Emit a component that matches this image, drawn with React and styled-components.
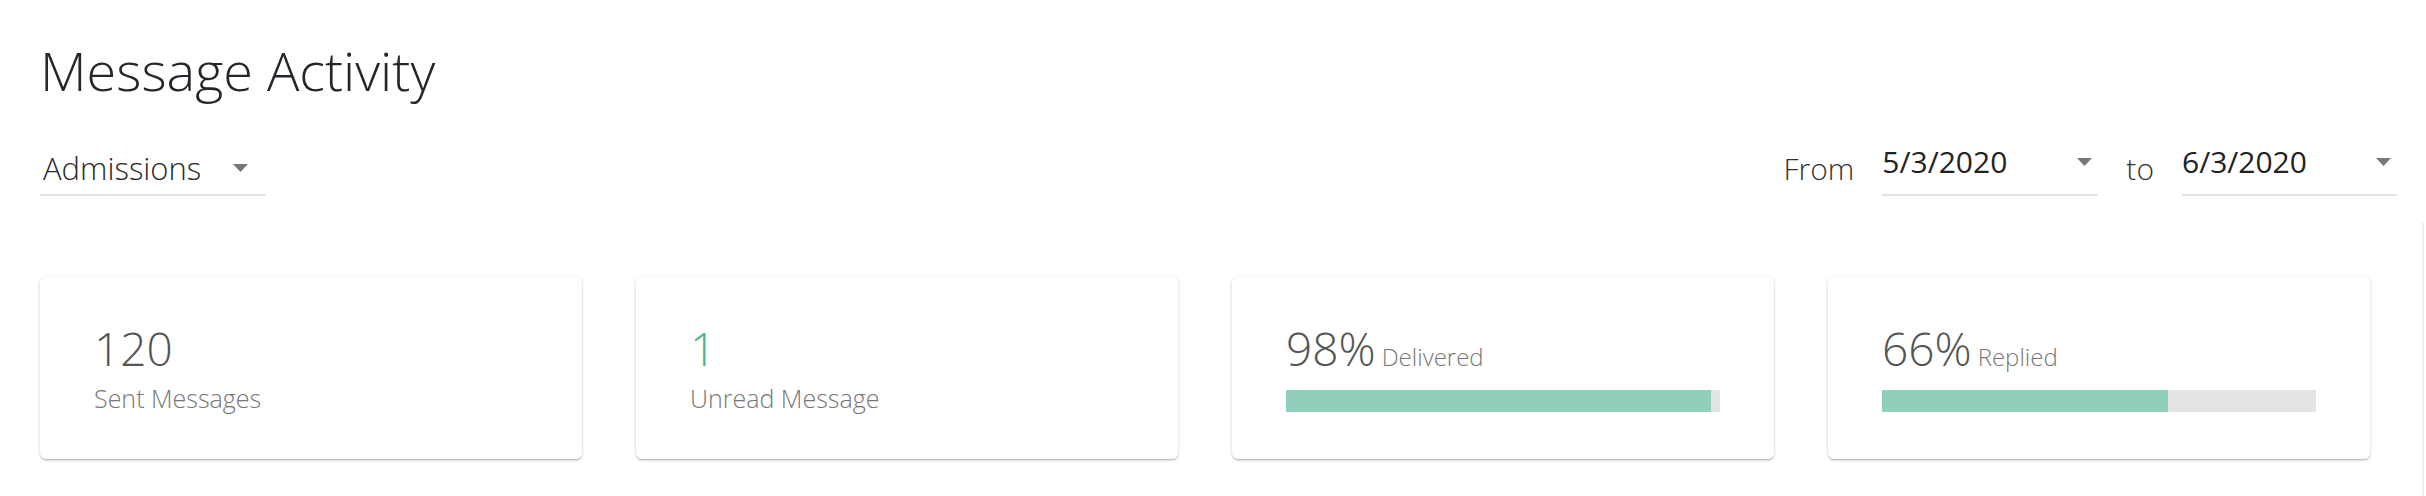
import React from "react";
import styled, { createGlobalStyle } from "styled-components";

const GlobalStyle = createGlobalStyle`
  html, body {
    margin: 0;
    padding: 0;
    background: #ffffff;
  }
  body {
    font-family: "Open Sans", "Noto Sans", "Liberation Sans", sans-serif;
    color: #222;
  }
`;

const stats = [
  { value: "120", label: "Sent Messages" },
  { value: "1", label: "Unread Message", accent: true },
  { value: "98%", label: "Delivered", percent: 98 },
  { value: "66%", label: "Replied", percent: 66 },
];

const Caret = () => (
  <svg width="15" height="8" viewBox="0 0 15 8">
    <path d="M0 0 L15 0 L7.5 8 Z" fill="#777" />
  </svg>
);

const StatCard = ({ value, label, accent, percent }) => {
  if (percent !== undefined) {
    return (
      <Card>
        <InlineStat>
          <Value>{value}</Value>
          <SmallLabel>{label}</SmallLabel>
        </InlineStat>
        <Track>
          <Fill style={{ width: `${percent}%` }} />
        </Track>
      </Card>
    );
  }

  return (
    <Card>
      <Value $accent={accent}>{value}</Value>
      <Label>{label}</Label>
    </Card>
  );
};

const App = () => {
  return (
    <>
      <GlobalStyle />
      <Page>
        <Main>
          <Title>Message Activity</Title>
          <Controls>
            <Select $width={226}>
              <SelectText $light>Admissions</SelectText>
              <Caret />
            </Select>
            <DateRange>
              <RangeLabel>From</RangeLabel>
              <Select $width={216} $date>
                <SelectText>5/3/2020</SelectText>
                <Caret />
              </Select>
              <RangeLabel>to</RangeLabel>
              <Select $width={215} $date>
                <SelectText>6/3/2020</SelectText>
                <Caret />
              </Select>
            </DateRange>
          </Controls>
          <Cards>
            {stats.map((s) => (
              <StatCard key={s.label} {...s} />
            ))}
          </Cards>
        </Main>
        <Gutter />
      </Page>
    </>
  );
};

export default App;

const Page = styled.div`
  display: flex;
  width: 2426px;
  height: 496px;
  overflow: hidden;
`;

const Main = styled.div`
  flex: 1;
  padding: 0 25px 0 40px;
  box-sizing: border-box;
`;

const Gutter = styled.div`
  width: 2px;
  margin-top: 223px;
  margin-right: 2px;
  background: #ececec;
`;

const Title = styled.h1`
  margin: 38px 0 0;
  font-size: 54px;
  font-weight: 300;
  line-height: 1.22;
  color: #23272b;
`;

const Controls = styled.div`
  display: flex;
  justify-content: space-between;
  align-items: flex-end;
  margin-top: 40px;
`;

const DateRange = styled.div`
  display: flex;
  align-items: flex-end;
  gap: 28px;
`;

const RangeLabel = styled.span`
  font-size: 30px;
  font-weight: 300;
  line-height: 1.2;
  color: #333;
  padding-bottom: 9px;
`;

const Select = styled.div`
  width: ${(p) => p.$width}px;
  display: flex;
  align-items: center;
  justify-content: ${(p) => (p.$date ? "space-between" : "flex-start")};
  padding: 0 ${(p) => (p.$date ? "6px 14px 0" : "0 7px 3px")};
  border-bottom: 2px solid #e3e3e3;
  box-sizing: border-box;
`;

const SelectText = styled.span`
  font-size: ${(p) => (p.$light ? "31px" : "30px")};
  font-weight: ${(p) => (p.$light ? 300 : 400)};
  line-height: 1.2;
  color: ${(p) => (p.$light ? "#2a2a2a" : "#222")};
  margin-right: ${(p) => (p.$light ? "32px" : "10px")};
`;

const Cards = styled.div`
  display: grid;
  grid-template-columns: repeat(4, 542px);
  gap: 54px;
  margin-top: 81px;
`;

const Card = styled.div`
  height: 182px;
  box-sizing: border-box;
  padding: 44px 54px 0;
  background: #fff;
  border-radius: 6px;
  box-shadow: 0 2px 2px -1px rgba(0, 0, 0, 0.16), 0 1px 2px rgba(0, 0, 0, 0.14),
    0 1px 4px rgba(0, 0, 0, 0.1);
  display: flex;
  flex-direction: column;
`;

const InlineStat = styled.div`
  display: flex;
  align-items: baseline;
  gap: 6px;
`;

const Value = styled.div`
  font-size: 46px;
  font-weight: 300;
  line-height: 1.2;
  color: ${(p) => (p.$accent ? "#4db38a" : "#555")};
`;

const Label = styled.div`
  margin-top: 7px;
  font-size: 25px;
  font-weight: 300;
  line-height: 1.2;
  color: #777;
`;

const SmallLabel = styled.span`
  font-size: 24px;
  font-weight: 300;
  line-height: 1.2;
  color: #777;
`;

const Track = styled.div`
  margin-top: 14px;
  height: 22px;
  background: #e4e4e4;
`;

const Fill = styled.div`
  height: 100%;
  background: #90cfb8;
`;
